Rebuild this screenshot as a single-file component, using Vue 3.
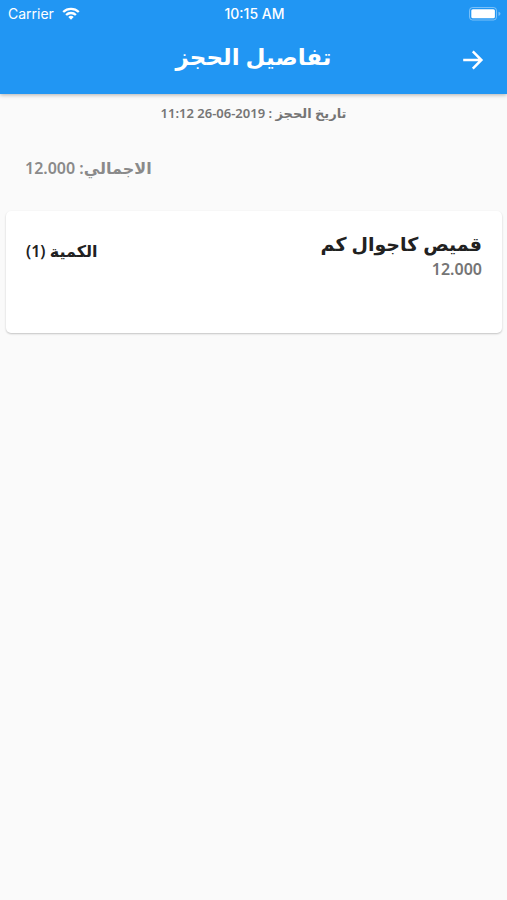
<script setup>
import { ref, computed } from "vue";

const booking = ref({
  date: "2019-06-26 11:12",
  items: [{ id: 1, name: "قميص كاجوال كم", price: 12, count: 1 }],
});

const total = computed(() =>
  booking.value.items.reduce((sum, item) => sum + item.price * item.count, 0)
);

const priceFormat = (val) => val.toFixed(3);

const goBack = () => {
  window.history.back();
};
</script>

<template>
  <div class="page" dir="rtl" lang="ar">
    <header class="top">
      <div class="status-bar" dir="ltr">
        <div class="carrier">
          <span>Carrier</span>
          <svg class="wifi" viewBox="0 0 18 13" aria-hidden="true">
            <g fill="none" stroke="#fff" stroke-width="2.3">
              <path d="M1.2 5A11.2 11.2 0 0 1 16.8 5" />
              <path d="M4.1 8A7 7 0 0 1 13.9 8" />
            </g>
            <path d="M9 12.8L6.3 10.1A3.9 3.9 0 0 1 11.7 10.1Z" fill="#fff" />
          </svg>
        </div>
        <time class="clock">10:15 AM</time>
        <svg class="battery" viewBox="0 0 32 14" aria-hidden="true">
          <rect
            x="0.5"
            y="0.5"
            width="27"
            height="12.5"
            rx="3"
            fill="none"
            stroke="#fff"
            stroke-opacity="0.4"
          />
          <rect x="2.3" y="2.3" width="23.6" height="9" rx="1.5" fill="#fff" />
          <path d="M29.5 4.7Q31.5 5.2 31.5 6.8T29.5 9Z" fill="#fff" fill-opacity="0.4" />
        </svg>
      </div>
      <div class="app-bar">
        <button class="back" type="button" aria-label="رجوع" @click="goBack">
          <svg viewBox="0 0 22 22" aria-hidden="true">
            <path
              d="M1.2 11H19M10.8 2.4L19.4 11L10.8 19.6"
              fill="none"
              stroke="#fff"
              stroke-width="2.5"
            />
          </svg>
        </button>
        <h1>تفاصيل الحجز</h1>
      </div>
    </header>

    <main>
      <p class="date">تاريخ الحجز : {{ booking.date }}</p>
      <p class="total">الاجمالي: {{ priceFormat(total) }}</p>
      <ul class="items">
        <li v-for="item in booking.items" :key="item.id" class="card">
          <div>
            <h2>{{ item.name }}</h2>
            <p class="price">{{ priceFormat(item.price) }}</p>
          </div>
          <p class="count">الكمية ({{ item.count }})</p>
        </li>
      </ul>
    </main>
  </div>
</template>

<style>
body {
  margin: 0;
  background-color: #fafafa;
}
</style>

<style scoped>
.page {
  min-height: 100vh;
  background-color: #fafafa;
  color: #212121;
  font-family: "Noto Sans", "DejaVu Sans", sans-serif;
  font-weight: 600;
}
h1,
h2,
p,
ul {
  margin: 0;
  padding: 0;
}
.top {
  background-color: #2196f3;
  color: #fff;
  box-shadow: 0 1px 4px rgba(0, 0, 0, 0.3);
}
.status-bar {
  display: grid;
  grid-template-columns: 1fr auto 1fr;
  align-items: center;
  height: 27px;
  padding: 0 6px 0 8px;
  font-family: Inter, sans-serif;
  font-size: 14px;
  font-weight: 400;
}
.carrier {
  display: flex;
  align-items: center;
  gap: 8px;
}
.wifi {
  width: 18px;
  height: 13px;
}
.clock {
  font-weight: 500;
}
.battery {
  justify-self: end;
  width: 32px;
  height: 14px;
}
.app-bar {
  display: grid;
  grid-template-columns: 48px 1fr 48px;
  align-items: start;
  height: 67px;
  padding: 0 10px;
}
.back {
  display: flex;
  justify-content: center;
  padding: 22px 0 12px;
  border: 0;
  background: none;
  cursor: pointer;
}
.back svg {
  width: 22px;
  height: 22px;
}
h1 {
  padding-top: 12px;
  font-size: 23px;
  line-height: 34px;
  text-align: center;
}
.date {
  padding: 8px 16px;
  color: #757575;
  font-size: 13px;
  line-height: 22px;
  text-align: center;
}
.total {
  padding: 24px 25px;
  color: #8a8a8a;
  font-size: 16px;
  line-height: 24px;
  text-align: left;
}
.items {
  padding: 7px 5px 6px 6px;
  list-style: none;
}
.card {
  display: flex;
  justify-content: space-between;
  min-height: 82px;
  padding: 20px;
  border-radius: 5px;
  background-color: #fff;
  box-shadow: 0 1px 2px rgba(0, 0, 0, 0.22);
}
h2 {
  font-size: 19px;
  line-height: 26px;
}
.price {
  color: #757575;
  font-size: 16px;
  line-height: 24px;
}
.count {
  padding-top: 8px;
  font-size: 16px;
  line-height: 24px;
}
</style>
